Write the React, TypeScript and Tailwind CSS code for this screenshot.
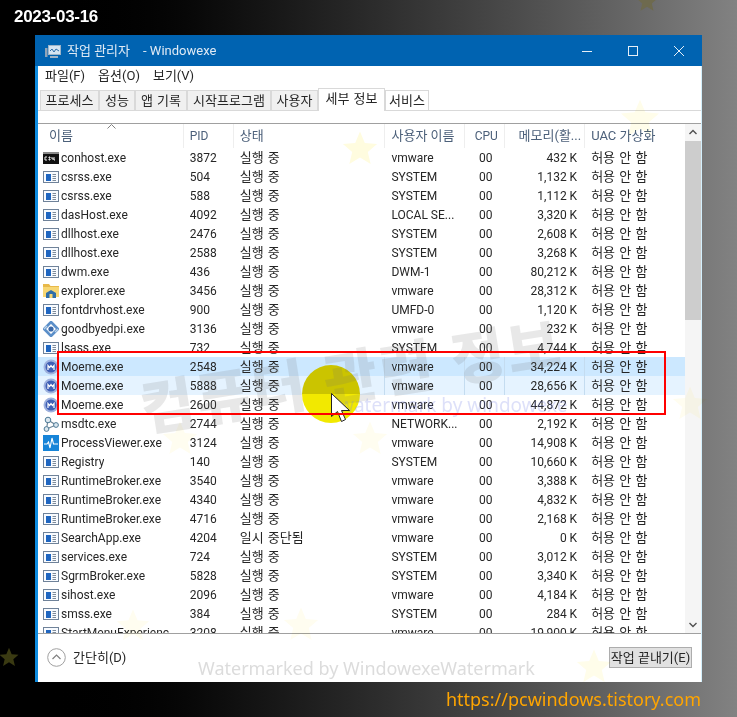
const rows: [string, string, string, string, string, string, string?][] = [
  ["console", "conhost.exe", "3872", "실행 중", "vmware", "432 K"],
  ["app", "csrss.exe", "504", "실행 중", "SYSTEM", "1,132 K"],
  ["app", "csrss.exe", "588", "실행 중", "SYSTEM", "1,112 K"],
  ["app", "dasHost.exe", "4092", "실행 중", "LOCAL SE...", "3,320 K"],
  ["app", "dllhost.exe", "2476", "실행 중", "SYSTEM", "2,608 K"],
  ["app", "dllhost.exe", "2588", "실행 중", "SYSTEM", "3,268 K"],
  ["app", "dwm.exe", "436", "실행 중", "DWM-1", "80,212 K"],
  ["folder", "explorer.exe", "3456", "실행 중", "vmware", "28,312 K"],
  ["app", "fontdrvhost.exe", "900", "실행 중", "UMFD-0", "1,120 K"],
  ["gear", "goodbyedpi.exe", "3136", "실행 중", "vmware", "232 K"],
  ["app", "lsass.exe", "732", "실행 중", "SYSTEM", "4,744 K"],
  ["moeme", "Moeme.exe", "2548", "실행 중", "vmware", "34,224 K", "bg-[#cce8ff]"],
  ["moeme", "Moeme.exe", "5888", "실행 중", "vmware", "28,656 K", "bg-[#e5f3ff]"],
  ["moeme", "Moeme.exe", "2600", "실행 중", "vmware", "44,872 K"],
  ["net", "msdtc.exe", "2744", "실행 중", "NETWORK...", "2,192 K"],
  ["pulse", "ProcessViewer.exe", "3124", "실행 중", "vmware", "14,908 K"],
  ["app", "Registry", "140", "실행 중", "SYSTEM", "10,660 K"],
  ["app", "RuntimeBroker.exe", "3540", "실행 중", "vmware", "3,388 K"],
  ["app", "RuntimeBroker.exe", "4340", "실행 중", "vmware", "4,832 K"],
  ["app", "RuntimeBroker.exe", "4716", "실행 중", "vmware", "2,168 K"],
  ["app", "SearchApp.exe", "4204", "일시 중단됨", "vmware", "0 K"],
  ["app", "services.exe", "724", "실행 중", "SYSTEM", "3,012 K"],
  ["app", "SgrmBroker.exe", "5828", "실행 중", "SYSTEM", "3,340 K"],
  ["app", "sihost.exe", "2096", "실행 중", "vmware", "4,184 K"],
  ["app", "smss.exe", "384", "실행 중", "SYSTEM", "284 K"],
  ["app", "StartMenuExperienc", "3208", "실행 중", "vmware", "19,900 K"],
];

const stars: [string, number, string][] = [
  ["left-[342px] top-[130px]", 36, "#fffcdf"],
  ["left-[620px] top-[98px]", 40, "#fffdea"],
  ["left-[162px] top-[420px]", 36, "#fffdf0"],
  ["left-[352px] top-[420px]", 36, "#fffdf0"],
  ["left-[672px] top-[385px]", 36, "#fffdf0"],
  ["left-[116px] top-[608px]", 34, "#fffdf0"],
  ["left-[283px] top-[606px]", 36, "#fffdf0"],
  ["left-[576px] top-[648px]", 36, "#fffdea"],
];

function Star({ size, color }: { size: number; color: string }) {
  return (
    <svg width={size} height={size} viewBox="0 0 24 24">
      <path d="M12 1l3.2 7.6 8.2.7-6.2 5.4 1.9 8L12 18.4l-7.1 4.3 1.9-8L.6 9.3l8.2-.7z" fill={color} />
    </svg>
  );
}

function Icon({ kind }: { kind: string }) {
  if (kind === "console")
    return (
      <svg width="16" height="16" viewBox="0 0 16 16">
        <rect x="0" y="2" width="16" height="12" fill="#111" />
        <rect x="0" y="2" width="16" height="2" fill="#8a8a8a" />
        <path d="M2 7h2M2 7v3h2M6 7h1v1H6zM6 9h1v1H6zM9 7v2h2M11 7v3h1" stroke="#eee" strokeWidth="1" fill="none" />
      </svg>
    );
  if (kind === "app")
    return (
      <svg width="16" height="16" viewBox="0 0 16 16">
        <rect x="0.5" y="2.5" width="15" height="11" fill="#f8fbff" stroke="#6f8299" />
        <rect x="3" y="5" width="5" height="7" fill="#1f66c1" />
        <path d="M9.5 5.5H13M9.5 7.5H13M9.5 9.5H13M9.5 11.5H13" stroke="#7d8a99" strokeWidth="1" />
      </svg>
    );
  if (kind === "folder")
    return (
      <svg width="16" height="16" viewBox="0 0 16 16">
        <path d="M0 1h6l1.5 2H16v11H0z" fill="#e8b94a" />
        <rect x="0" y="4" width="16" height="10" fill="#f7d774" />
        <path d="M3 15v-5l5-3 5 3v5z" fill="#2f6ea8" />
        <rect x="6.5" y="11" width="3" height="4" fill="#f7d774" />
      </svg>
    );
  if (kind === "gear")
    return (
      <svg width="16" height="16" viewBox="0 0 16 16">
        <path d="M8 1l6.8 7L8 15 1.2 8z" fill="none" stroke="#5b8fc9" strokeWidth="2.6" />
        <circle cx="8" cy="8" r="2.6" fill="#3a68a8" />
        <path d="M1 8l3-3M15 8l-3 3" stroke="#b9d2ea" strokeWidth="1.4" />
      </svg>
    );
  if (kind === "moeme")
    return (
      <svg width="16" height="16" viewBox="0 0 16 16">
        <circle cx="8" cy="8" r="7.5" fill="#9fb2de" />
        <circle cx="8" cy="8" r="5.5" fill="#3f5fb5" />
        <path d="M5 11V6.5l1.6 2 1.4-2 1.4 2 1.6-2V11" stroke="#fff" strokeWidth="1.2" fill="none" />
      </svg>
    );
  if (kind === "net")
    return (
      <svg width="16" height="16" viewBox="0 0 16 16">
        <path d="M5 4l8 5-9.500 4z" fill="none" stroke="#6d8597" strokeWidth="1.2" />
        <circle cx="5" cy="4" r="2.8" fill="#dbe7ef" stroke="#4d7a96" />
        <circle cx="13" cy="9" r="2.4" fill="#dbe7ef" stroke="#4d7a96" />
        <circle cx="3.5" cy="13" r="2.4" fill="#dbe7ef" stroke="#4d7a96" />
      </svg>
    );
  return (
    <svg width="16" height="16" viewBox="0 0 16 16">
      <rect width="16" height="16" fill="#1684d8" />
      <path d="M1 9h3l1.500-2 1.500 6 2-10 1.500 6H15" fill="none" stroke="#fff" strokeWidth="1.1" />
    </svg>
  );
}

const text = "text-[12px] text-[#262626]";
const ko = "text-[13px] text-[#262626] [word-spacing:1px]";

export default function App() {
  return (
    <div className="relative h-[717px] w-[737px] overflow-hidden bg-gradient-to-r from-[#000000] from-[5%] to-[#828282] font-['Roboto','Noto_Sans_CJK_KR',sans-serif]">
      <div className="flex h-[35px] items-center pl-[14px] pb-[1px] font-['Liberation_Sans',sans-serif] text-[17px] font-bold tracking-[-0.3px] text-white">
        2023-03-16
      </div>

      <div className="ml-[35px] flex h-[647px] w-[667px] flex-col border-x-[1px] border-l-[3px] border-l-[#0f8ce0] border-r-[#d3effc] bg-white">
        <div className="-mx-[1px] -ml-[3px] flex h-[31px] items-center bg-[#0063b1] pl-[10px] text-[13px] text-[#dfeaf5]">
          <svg width="16" height="16" viewBox="0 0 16 16" className="mr-[6px]">
            <rect x="3.500" y="2.500" width="12" height="9" fill="#d4e4f2" stroke="#9db4c8" />
            <path d="M5 8l2-2 2 3 2-3 3 2" stroke="#2f6ea8" fill="none" />
            <rect x="0" y="5" width="2.500" height="9" fill="#8fa4b8" />
            <rect x="5" y="13" width="8" height="2" fill="#9fb3c6" />
          </svg>
          <span>작업 관리자</span>
          <span className="ml-[13px]">- Windowexe</span>
          <div className="ml-auto flex items-center text-[#e6eff7]">
            <svg width="46" height="30" viewBox="0 0 46 30"><path d="M18 15.500h10" stroke="currentColor" /></svg>
            <svg width="46" height="30" viewBox="0 0 46 30"><rect x="18.500" y="10.500" width="9" height="9" fill="none" stroke="currentColor" /></svg>
            <svg width="46" height="30" viewBox="0 0 46 30"><path d="M18 10l10 10M28 10L18 20" stroke="currentColor" /></svg>
          </div>
        </div>

        <div className={`flex h-[22px] items-center gap-[13px] pb-[2px] pl-[7px] ${ko}`}>
          <span>파일(F)</span>
          <span>옵션(O)</span>
          <span>보기(V)</span>
        </div>

        <div className={`flex h-[23px] items-end border-b border-[#d9d9d9] pl-[2px] ${ko}`}>
          {[
            ["프로세스", "w-[59px]"],
            ["성능", "w-[36px]"],
            ["앱 기록", "w-[52px]"],
            ["시작프로그램", "w-[84px]"],
            ["사용자", "w-[47px]"],
          ].map(([t, w]) => (
            <div key={t} className={`flex h-[20px] items-center justify-center border border-b-0 border-[#d9d9d9] bg-[#f0f0f0] ${w}`}>
              {t}
            </div>
          ))}
          <div className="-mb-[1px] flex h-[23px] w-[67px] items-center justify-center border border-b-0 border-[#d9d9d9] bg-white pb-[2px]">세부 정보</div>
          <div className="flex h-[20px] w-[44px] items-center justify-center border border-b-0 border-[#d9d9d9] bg-white">서비스</div>
        </div>

        <div className="h-[12px]" />

        <div className="flex h-[511px] flex-col border-y border-[#a0a0a0]">
          <div className="flex min-h-0 flex-1">
            <div className="min-w-0 flex-1 overflow-hidden">
              <div className="flex h-[24px] items-center text-[13px] text-[#4c607a]">
                <div className="relative flex h-full w-[146px] items-center border-r border-[#eeeeee] pl-[11px]">
                  이름
                  <svg width="9" height="5" viewBox="0 0 9 5" className="absolute left-[69px] top-[0px]"><path d="M.5 4.500l4-4 4 4" stroke="#808080" fill="none" /></svg>
                </div>
                <div className="flex h-full w-[50px] items-center border-r border-[#eeeeee] pl-[6px] text-[12px]">PID</div>
                <div className="flex h-full w-[152px] items-center border-r border-[#eeeeee] pl-[6px]">상태</div>
                <div className="flex h-full w-[80px] items-center border-r border-[#eeeeee] pl-[6px]">사용자 이름</div>
                <div className="flex h-full w-[40px] items-center justify-center border-r border-[#eeeeee] pl-[3px] text-[12px]">CPU</div>
                <div className="flex h-full w-[80px] items-center justify-end border-r border-[#eeeeee] pr-[3px]">메모리(활...</div>
                <div className="flex h-full w-[100px] items-center pl-[6px]">UAC 가상화</div>
              </div>
              {rows.map(([icon, name, pid, status, user, mem, bg], i) => {
                const sep = bg ? "h-full flex items-center border-r border-[#c4dcf0]" : "h-full flex items-center border-r border-transparent";
                return (
                  <div key={i} className={`flex h-[19px] items-center ${text} ${bg ?? ""}`}>
                    <div className="flex h-full w-[146px] items-center pl-[5px]">
                      <span className="mr-[2px] shrink-0"><Icon kind={icon} /></span>
                      <span className="truncate">{name}</span>
                    </div>
                    <div className="w-[50px] pl-[6px]">{pid}</div>
                    <div className={`w-[152px] pl-[6px] ${ko} ${sep}`}>{status}</div>
                    <div className={`w-[80px] pl-[6px] ${sep}`}>{user}</div>
                    <div className={`w-[40px] justify-center pl-[2px] ${sep}`}>00</div>
                    <div className={`w-[80px] justify-end pr-[7px] ${sep}`}>{mem}</div>
                    <div className={`w-[100px] pl-[6px] ${ko}`}>허용 안 함</div>
                  </div>
                );
              })}
            </div>
            <div className="flex w-[16px] shrink-0 flex-col items-center bg-[#f5f5f5]">
              <svg width="16" height="17" viewBox="0 0 16 17"><path d="M4.500 10L8 6.500l3.500 3.500" stroke="#505050" strokeWidth="1.400" fill="none" /></svg>
              <div className="h-[179px] w-full bg-[#cdcdcd]" />
              <div className="flex-1" />
              <svg width="16" height="17" viewBox="0 0 16 17"><path d="M4.500 7L8 10.500 11.500 7" stroke="#505050" strokeWidth="1.400" fill="none" /></svg>
            </div>
          </div>
        </div>

        <div className="flex flex-1 items-center justify-between pl-[9px] pr-[9px] pb-[1px]">
          <div className={`flex items-center gap-[7px] ${ko}`}>
            <svg width="19" height="19" viewBox="0 0 19 19">
              <circle cx="9.500" cy="9.500" r="8.800" fill="none" stroke="#a0a0a0" />
              <path d="M5.500 11l4-4 4 4" fill="none" stroke="#808080" strokeWidth="1.200" />
            </svg>
            간단히(D)
          </div>
          <div className={`flex h-[21px] w-[83px] items-center justify-center whitespace-nowrap border border-[#adadad] bg-[#e1e1e1] text-[13px] text-[#262626]`}>
            작업 끝내기(E)
          </div>
        </div>
      </div>

      <div className="flex h-[35px] items-center justify-end pr-[36px] pb-[1px] font-['Noto_Sans',sans-serif] text-[18px] text-[#ffa500]">
        https://pcwindows.tistory.com
      </div>

      {stars.map(([pos, s, c]) => (
        <div key={pos} className={`pointer-events-none absolute mix-blend-multiply ${pos}`}>
          <Star size={s} color={c} />
        </div>
      ))}
      <div className="absolute left-[-1px] top-[647px]"><Star size={20} color="#3a3a12" /></div>
      <div className="absolute left-[636px] top-[-10px]"><Star size={22} color="#6e6a4e" /></div>

      <div className="pointer-events-none absolute left-[302px] top-[365px] h-[58px] w-[58px] rounded-full bg-[linear-gradient(to_bottom,#cbc400_50%,#f2e900_50%)]" />
      <div className="pointer-events-none absolute left-[138px] top-[330px] -rotate-[9deg] whitespace-nowrap font-['Noto_Sans_CJK_KR',sans-serif] text-[58px] font-black tracking-[3px] text-[rgba(110,110,110,0.16)]">
        컴퓨터 관련 정보
      </div>
      <div className="pointer-events-none absolute left-[339px] top-[391px] whitespace-nowrap font-['Noto_Sans',sans-serif] text-[19px] text-[rgba(120,130,230,0.25)]">
        watermark by windowexe
      </div>
      <div className="pointer-events-none absolute left-[198px] top-[655px] whitespace-nowrap font-['Noto_Sans',sans-serif] text-[18px] text-[#dcdcdc]">
        Watermarked by WindowexeWatermark
      </div>

      <svg className="pointer-events-none absolute left-[331px] top-[393px]" width="19" height="31" viewBox="0 0 19 31">
        <path d="M.5.5v23l6-5 4 10 4-2-4-9h8z" fill="#fff" stroke="#222" />
      </svg>
      <div className="pointer-events-none absolute left-[57px] top-[351px] h-[64px] w-[609px] border-2 border-[#ff0000]" />
    </div>
  );
}
